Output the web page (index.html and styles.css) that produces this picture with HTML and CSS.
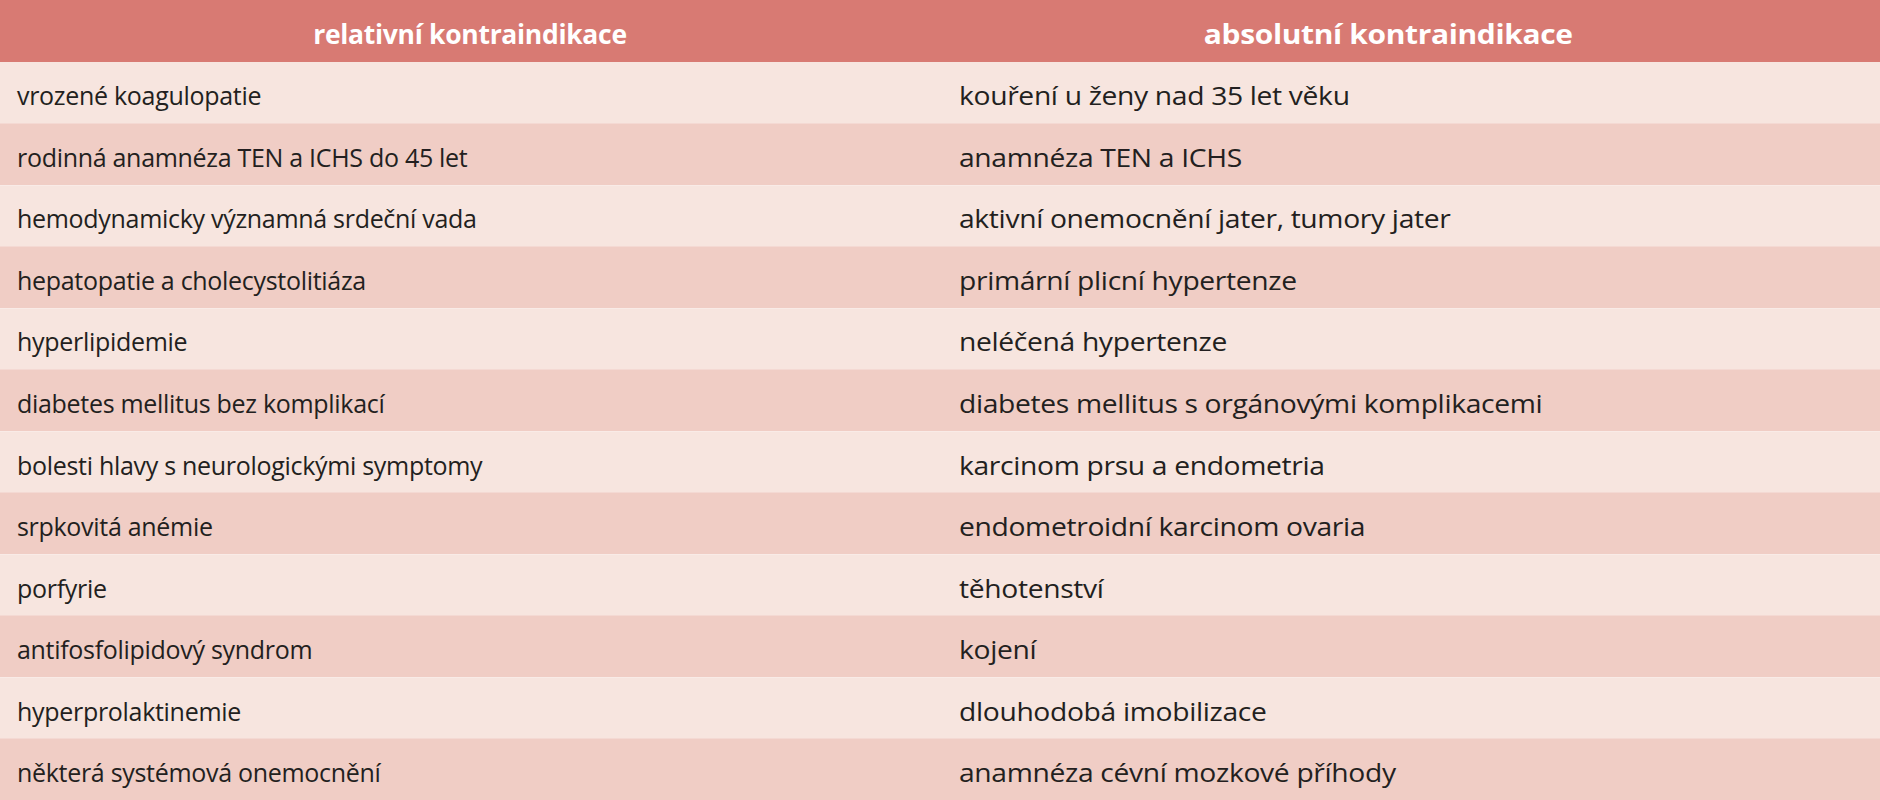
FILE: index.html
```html
<!DOCTYPE html>
<html lang="cs">
<head>
<meta charset="utf-8">
<title>Kontraindikace</title>
<link rel="stylesheet" href="styles.css">
</head>
<body>
<div class="table">
  <div class="row head"><div class="cell rel"><span>relativní kontraindikace</span></div><div class="cell abs"><span>absolutní kontraindikace</span></div></div>
  <div class="row light"><div class="cell rel"><span>vrozené koagulopatie</span></div><div class="cell abs"><span>kouření u ženy nad 35 let věku</span></div></div>
  <div class="row dark"><div class="cell rel"><span>rodinná anamnéza TEN a ICHS do 45 let</span></div><div class="cell abs"><span>anamnéza TEN a ICHS</span></div></div>
  <div class="row light"><div class="cell rel"><span>hemodynamicky významná srdeční vada</span></div><div class="cell abs"><span>aktivní onemocnění jater, tumory jater</span></div></div>
  <div class="row dark"><div class="cell rel"><span>hepatopatie a cholecystolitiáza</span></div><div class="cell abs"><span>primární plicní hypertenze</span></div></div>
  <div class="row light"><div class="cell rel"><span>hyperlipidemie</span></div><div class="cell abs"><span>neléčená hypertenze</span></div></div>
  <div class="row dark"><div class="cell rel"><span>diabetes mellitus bez komplikací</span></div><div class="cell abs"><span>diabetes mellitus s orgánovými komplikacemi</span></div></div>
  <div class="row light"><div class="cell rel"><span>bolesti hlavy s neurologickými symptomy</span></div><div class="cell abs"><span>karcinom prsu a endometria</span></div></div>
  <div class="row dark"><div class="cell rel"><span>srpkovitá anémie</span></div><div class="cell abs"><span>endometroidní karcinom ovaria</span></div></div>
  <div class="row light"><div class="cell rel"><span>porfyrie</span></div><div class="cell abs"><span>těhotenství</span></div></div>
  <div class="row dark"><div class="cell rel"><span>antifosfolipidový syndrom</span></div><div class="cell abs"><span>kojení</span></div></div>
  <div class="row light"><div class="cell rel"><span>hyperprolaktinemie</span></div><div class="cell abs"><span>dlouhodobá imobilizace</span></div></div>
  <div class="row dark"><div class="cell rel"><span>některá systémová onemocnění</span></div><div class="cell abs"><span>anamnéza cévní mozkové příhody</span></div></div>
</div>
</body>
</html>
```
FILE: styles.css
```css
html, body {
  margin: 0;
  padding: 0;
  background: #f7e5df;
}
.table {
  width: 1880px;
  height: 800px;
  display: grid;
  grid-template-rows: repeat(13, 1fr);
  font-family: "Open Sans", "Noto Sans", sans-serif;
  font-size: 25px;
  color: #231f20;
  letter-spacing: -0.3px;
}
.row {
  display: grid;
  grid-template-columns: 940px 940px;
  align-items: center;
}
.cell {
  padding: 6px 0 0 17px;
  white-space: nowrap;
}
.cell span {
  display: inline-block;
}
.cell.abs {
  padding-left: 19px;
}
.cell.abs span {
  transform: scaleX(1.13);
  transform-origin: left center;
}
.row.head {
  background: #d87a73;
  color: #ffffff;
  font-weight: 700;
  font-size: 26.5px;
}
.row.head .cell {
  text-align: center;
  padding-left: 0;
}
.row.head .cell.abs {
  padding-right: 44px;
}
.row.head .cell.abs span {
  transform-origin: center center;
}
.row.light { background: #f7e5df; }
.row.dark { background: #f0cdc5; }
.row.light + .row.dark,
.row.dark + .row.light {
  box-shadow: inset 0 1px 0 rgba(255, 255, 255, 0.25);
}
```
